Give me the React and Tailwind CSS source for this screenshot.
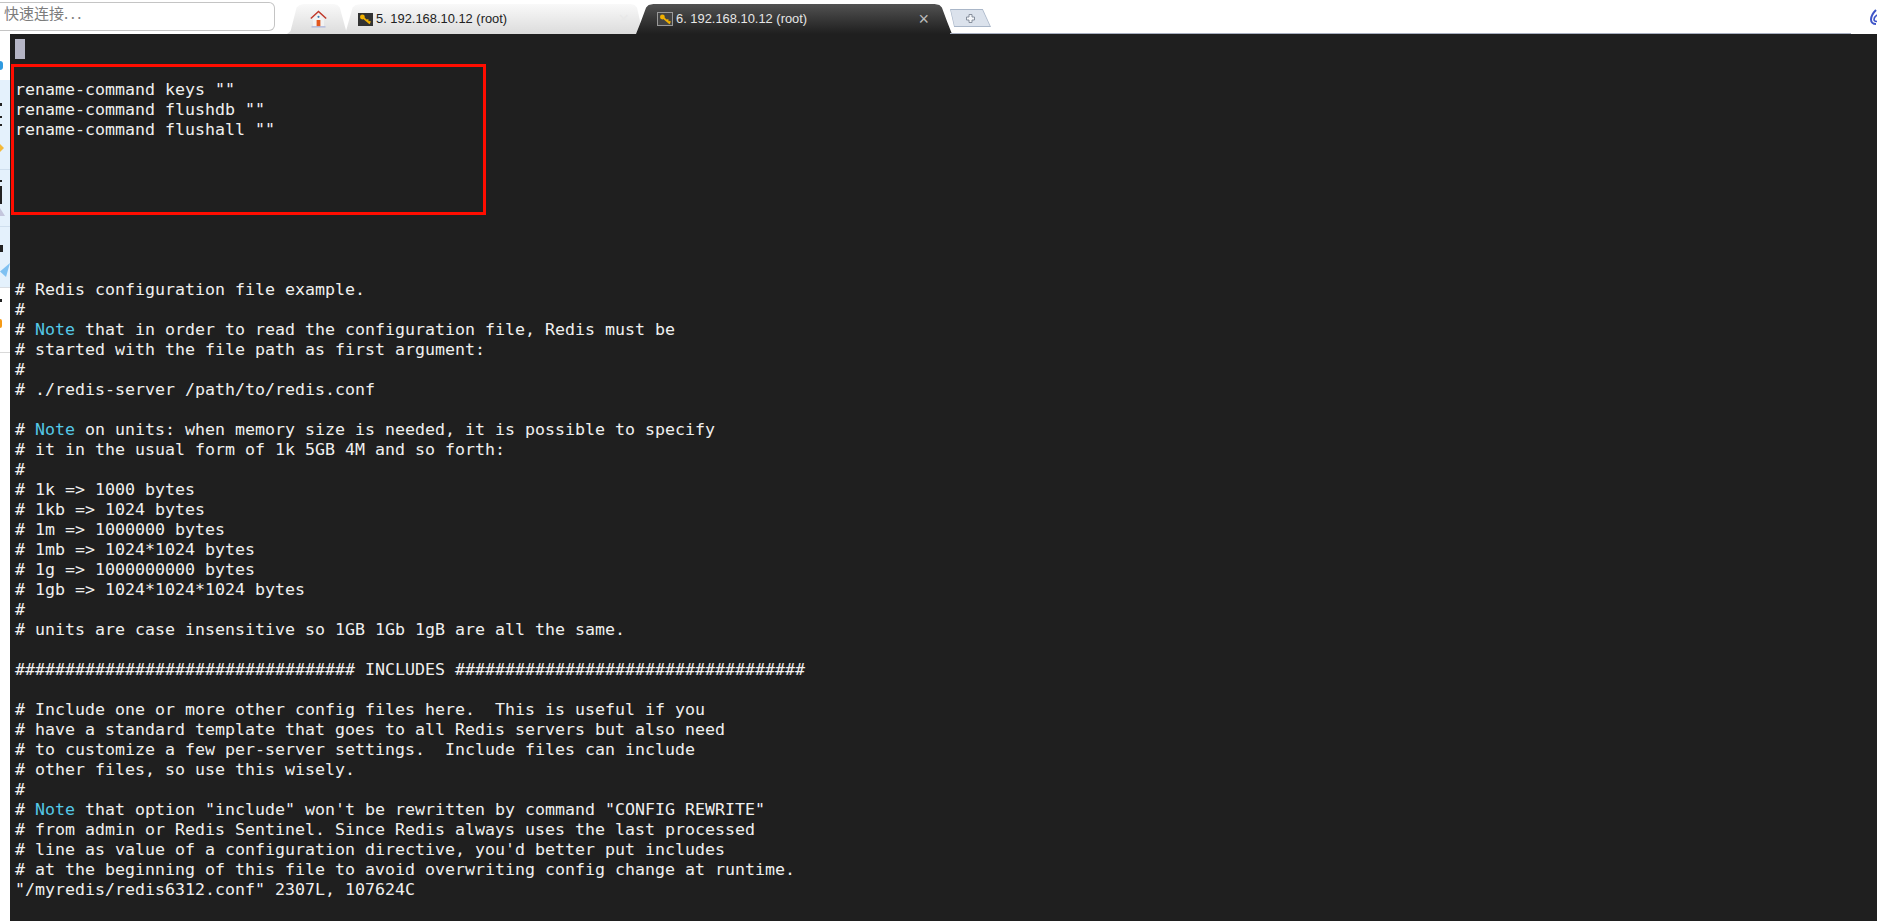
const lines = [
  '',
  '',
  'rename-command keys ""',
  'rename-command flushdb ""',
  'rename-command flushall ""',
  '', '', '', '', '', '', '',
  '# Redis configuration file example.',
  '#',
  '# Note that in order to read the configuration file, Redis must be',
  '# started with the file path as first argument:',
  '#',
  '# ./redis-server /path/to/redis.conf',
  '',
  '# Note on units: when memory size is needed, it is possible to specify',
  '# it in the usual form of 1k 5GB 4M and so forth:',
  '#',
  '# 1k => 1000 bytes',
  '# 1kb => 1024 bytes',
  '# 1m => 1000000 bytes',
  '# 1mb => 1024*1024 bytes',
  '# 1g => 1000000000 bytes',
  '# 1gb => 1024*1024*1024 bytes',
  '#',
  '# units are case insensitive so 1GB 1Gb 1gB are all the same.',
  '',
  '################################## INCLUDES ###################################',
  '',
  '# Include one or more other config files here.  This is useful if you',
  '# have a standard template that goes to all Redis servers but also need',
  '# to customize a few per-server settings.  Include files can include',
  '# other files, so use this wisely.',
  '#',
  '# Note that option "include" won\'t be rewritten by command "CONFIG REWRITE"',
  '# from admin or Redis Sentinel. Since Redis always uses the last processed',
  '# line as value of a configuration directive, you\'d better put includes',
  '# at the beginning of this file to avoid overwriting config change at runtime.',
  '"/myredis/redis6312.conf" 2307L, 107624C',
];

const KeyIcon = () => (
  <svg width="13" height="11" viewBox="0 0 13 11">
    <circle cx="3.4" cy="3" r="2.4" fill="#f2b200" />
    <path d="M4.5 4l6.5 5.5M8 7l1.3-1.5M10 8.7l1.3-1.5" stroke="#f2b200" strokeWidth="1.7" fill="none" />
  </svg>
);

const HomeIcon = () => (
  <svg width="17" height="18" viewBox="0 0 17 18">
    <path d="M0.8 8.5L8.5 1.5l7.7 7" stroke="#c0392b" strokeWidth="1.5" fill="none" />
    <path d="M3 8.5L8.5 3.5l5.5 5V16H3z" fill="#f2f2f2" />
    <rect x="6.6" y="10" width="3.8" height="6.5" fill="#e2571e" />
    <circle cx="8.5" cy="6.8" r="1.1" fill="#3f7fb5" />
    <path d="M1.5 16.8h14" stroke="#aab4dc" strokeWidth="1.2" />
  </svg>
);

const PlusIcon = () => (
  <svg width="9" height="9" viewBox="0 0 9 9">
    <path d="M3 0.5h3v2.5h2.500v3H6v2.500H3V6H0.500V3H3z" fill="#f4f6f9" stroke="#7d8794" strokeWidth="0.9" />
  </svg>
);

const Line = ({ text }) => {
  if (text.startsWith('# Note')) {
    return (
      <div className="h-5 whitespace-pre">
        # <span className="text-[#55c8e6]">Note</span>{text.slice(6)}
      </div>
    );
  }
  return <div className="h-5 whitespace-pre">{text}</div>;
};

const App = () => {
  return (
    <div className="h-[921px] w-[1877px] overflow-hidden bg-white flex flex-col">
      {/* top bar */}
      <div className="h-[34px] shrink-0 flex items-start relative bg-white">
        <div className="mt-[2px] w-[275px] h-[29px] bg-white border border-l-0 border-[#c4c4c4] rounded-r-md pl-1 text-[#7c7c7c] text-[15px] leading-[20px] [font-family:'Noto_Sans_CJK_SC',sans-serif]">
          快速连接<span className="tracking-[2.5px]">...</span>
        </div>
        <div className="ml-[12px] mt-[4px] w-[60px] h-[30px] pl-[3px] flex items-center justify-center bg-gradient-to-b from-[#f9f9f9] to-[#dcdcdc] [clip-path:polygon(0_100%,6%_90%,16%_12%,21%_3%,28%_0,78%_0,84%_3%,88%_12%,100%_100%)]">
          <HomeIcon />
        </div>
        <div className="ml-[-4px] mt-[4px] w-[300px] h-[30px] flex items-center pl-[15px] bg-gradient-to-b from-[#f9f9f9] to-[#dcdcdc] [clip-path:polygon(0_100%,1%_90%,3.2%_12%,4.200%_3%,6%_0,96%_0,97.200%_3%,98%_12%,100%_100%)] text-[12.9px] text-[#222] [font-family:'Liberation_Sans',sans-serif]">
          <span className="w-[15px] h-[13px] bg-[#333] flex items-center justify-center mr-[3px]"><KeyIcon /></span>
          <span>5. 192.168.10.12 (root)</span>
          <span className="ml-auto mr-[14px] text-[#e8e8e8] text-[18px] leading-none">×</span>
        </div>
        <div className="ml-[-7px] mt-[4px] w-[316px] h-[30px] flex items-center pl-[21px] bg-gradient-to-b from-[#525252] to-[#1f1f1f] [clip-path:polygon(0_100%,1.500%_60%,3.200%_12%,4%_3%,5.500%_0,94.500%_0,96%_3%,96.800%_12%,98.500%_60%,100%_100%)] text-[12.9px] text-[#e6e6e6] [font-family:'Liberation_Sans',sans-serif]">
          <span className="w-[16px] h-[14px] bg-[#444] border border-[#999] flex items-center justify-center mr-[3px]"><KeyIcon /></span>
          <span>6. 192.168.10.12 (root)</span>
          <span className="ml-auto mr-[23px] text-[#bbb] text-[18px] leading-none">×</span>
        </div>
        <div className="ml-[-2px] mt-[9px] w-[41px] h-[18px] flex items-center justify-center bg-[#a9b6c8] [clip-path:polygon(0_0,80%_0,100%_100%,10%_100%)]">
          <div className="w-full h-full flex items-center justify-center bg-[#dbe2ec] [clip-path:polygon(2%_6%,79%_6%,97%_94%,11%_94%)]">
            <PlusIcon />
          </div>
        </div>
        <div className="absolute left-[950px] top-[33px] w-[901px] h-px bg-[#a8afc0]" />
        <svg className="absolute right-0 top-[9px]" width="7" height="16" viewBox="0 0 7 16">
          <path d="M6 1C3 4 1 7 1 10.500 1 13 3 15 6 15" stroke="#3f55c8" strokeWidth="2" fill="none" />
          <path d="M7 6C5 7.500 4 9 4 10.500 4 12 5 12.500 7 12.500" stroke="#3f55c8" strokeWidth="1.600" fill="none" />
        </svg>
      </div>

      <div className="flex-1 flex min-h-0">
        {/* clipped side panel */}
        <div className="w-[10px] shrink-0 bg-white flex flex-col overflow-hidden">
          <div className="h-[46px] pt-[27px]">
            <div className="w-[3px] h-[9px] bg-[#2f9ae0] rounded-r-full" />
          </div>
          <div className="h-[90px] bg-[#e4f1fc] border-b border-[#cfdfee] pt-[23px]">
            <div className="w-[2px] h-[3px] bg-[#222]" />
            <div className="w-[2px] h-[2px] bg-[#222] mt-[10px]" />
            <div className="w-[2px] h-[2px] bg-[#222] mt-[6px]" />
            <div className="w-[4px] h-[8px] bg-[#f4b93a] mt-[18px] [clip-path:polygon(0_0,100%_50%,0_100%)]" />
          </div>
          <div className="h-[57px] bg-[#e4f1fc] border-b border-[#cfdfee] pt-[10px]">
            <div className="w-[2px] h-[2px] bg-[#222]" />
            <div className="w-[2px] h-[18px] bg-[#222] mt-[4px]" />
            <div className="w-[5px] h-[8px] bg-[#c4c6dd] mt-[4px] [clip-path:polygon(0_0,100%_100%,0_100%)]" />
          </div>
          <div className="h-[61px] bg-[#e4f1fc] border-b border-[#d9dde2] pt-[18px]">
            <div className="w-[3px] h-[7px] bg-[#222]" />
            <div className="w-[10px] h-[14px] bg-[#7fc1f2] mt-[11px] [clip-path:polygon(100%_0,60%_100%,0_60%)]" />
          </div>
          <div className="h-[65px] border-b border-[#d9d9d9] pt-[11px]">
            <div className="w-[2px] h-[3px] bg-[#222]" />
            <div className="w-[2px] h-[9px] bg-[#f59a16] rounded-r-full mt-[17px]" />
          </div>
        </div>

        {/* terminal */}
        <div className="flex-1 bg-[#1f1f1f] relative pt-[6px] pl-[5px] text-[#f0f0f0] text-[16.61px] leading-5 [font-family:'DejaVu_Sans_Mono',monospace]">
          <div className="absolute left-[5px] top-[5px] w-[10px] h-5 bg-[#b5b5c5]" />
          {lines.map((text, i) => (
            <Line key={i} text={text} />
          ))}
          <div className="absolute left-[1px] top-[30px] w-[475px] h-[151px] border-[3px] border-[#ff0d00]" />
        </div>
      </div>
    </div>
  );
};

export default App;
